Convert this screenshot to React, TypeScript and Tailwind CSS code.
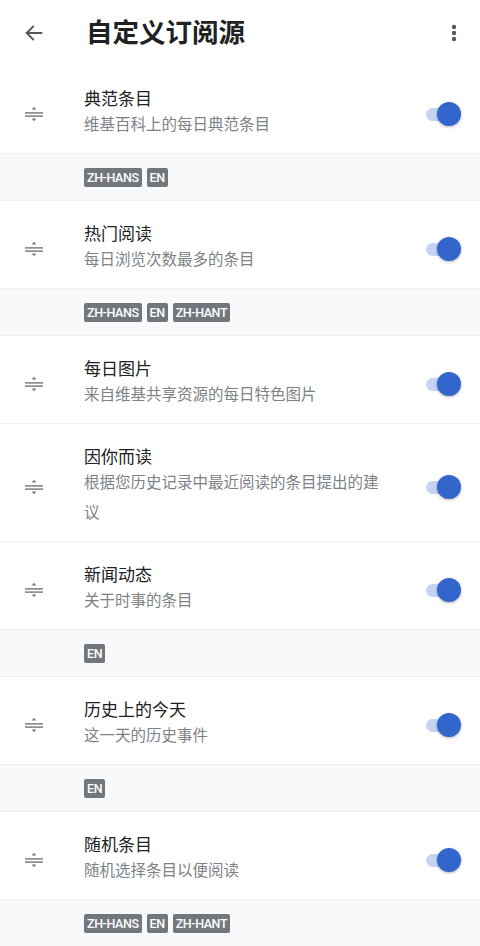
import React from "react";

type Item = { title: string; sub: string; langs?: string[] };

const items: Item[] = [
  { title: "典范条目", sub: "维基百科上的每日典范条目", langs: ["ZH-HANS", "EN"] },
  { title: "热门阅读", sub: "每日浏览次数最多的条目", langs: ["ZH-HANS", "EN", "ZH-HANT"] },
  { title: "每日图片", sub: "来自维基共享资源的每日特色图片" },
  { title: "因你而读", sub: "根据您历史记录中最近阅读的条目提出的建议" },
  { title: "新闻动态", sub: "关于时事的条目", langs: ["EN"] },
  { title: "历史上的今天", sub: "这一天的历史事件", langs: ["EN"] },
  { title: "随机条目", sub: "随机选择条目以便阅读", langs: ["ZH-HANS", "EN", "ZH-HANT"] },
];

const cjk = { fontFamily: 'Roboto, "Noto Sans CJK SC", sans-serif' };

function DragIcon() {
  return (
    <svg width="20" height="16" viewBox="0 0 20 16" className="text-[#72777d]">
      <path d="M10 0.8 L12.3 3.6 H7.7 Z" fill="currentColor" />
      <rect x="1" y="6.2" width="18" height="1.4" fill="currentColor" />
      <rect x="1" y="9.4" width="18" height="1.4" fill="currentColor" />
      <path d="M10 15.2 L12.3 12.4 H7.7 Z" fill="currentColor" />
    </svg>
  );
}

function Toggle() {
  return (
    <div className="relative w-[36px] h-[24px] flex items-center">
      <div className="w-[30px] h-[13px] rounded-full bg-[#c5d4f3] ml-[1px]" />
      <div className="absolute right-0 top-0 w-[24px] h-[24px] rounded-full bg-[#3366cc] shadow-[0_1px_3px_rgba(0,0,0,0.3)]" />
    </div>
  );
}

export default function App() {
  return (
    <div className="w-[480px] min-h-[946px] bg-white" style={cjk}>
      <div className="h-[66px] flex items-center">
        <div className="w-[66px] flex justify-center pl-[2px]">
          <svg width="22" height="22" viewBox="0 0 24 24" fill="none">
            <path d="M20 12H5M11 5l-7 7 7 7" stroke="#54595d" strokeWidth="2.2" strokeLinecap="square" />
          </svg>
        </div>
        <div className="ml-[20px] flex-1 text-[26.5px] font-semibold text-[#202122] leading-none">自定义订阅源</div>
        <div className="w-[50px] flex justify-center pr-[2px]">
          <svg width="6" height="18" viewBox="0 0 6 18">
            <circle cx="3" cy="3" r="2.2" fill="#54595d" />
            <circle cx="3" cy="9" r="2.2" fill="#54595d" />
            <circle cx="3" cy="15" r="2.2" fill="#54595d" />
          </svg>
        </div>
      </div>
      {items.map((it) => (
        <div key={it.title}>
          <div className="flex items-center border-b border-[#f0f1f3] pt-[22px] pb-[13px]">
            <div className="w-[84px] flex justify-center pr-[16px]">
              <DragIcon />
            </div>
            <div className="flex-1 min-w-0 pr-[4px]">
              <div className="text-[17px] leading-[22px] text-[#202122]">{it.title}</div>
              <div className="text-[15.5px] leading-[30px] text-[#7d8287] w-[300px]">{it.sub}</div>
            </div>
            <div className="w-[62px] flex justify-start pl-[7px]">
              <Toggle />
            </div>
          </div>
          {it.langs && (
            <div className="h-[47px] bg-[#f8f9fa] border-b border-[#eceef1] flex items-center gap-[5px] pl-[84px]">
              {it.langs.map((l) => (
                <span
                  key={l}
                  className="h-[19px] px-[3px] rounded-[2px] bg-[#72777d] text-white text-[12.5px] font-medium leading-[19px] tracking-[-0.4px]"
                  style={{ fontFamily: "Roboto, sans-serif" }}
                >
                  {l}
                </span>
              ))}
            </div>
          )}
        </div>
      ))}
    </div>
  );
}
